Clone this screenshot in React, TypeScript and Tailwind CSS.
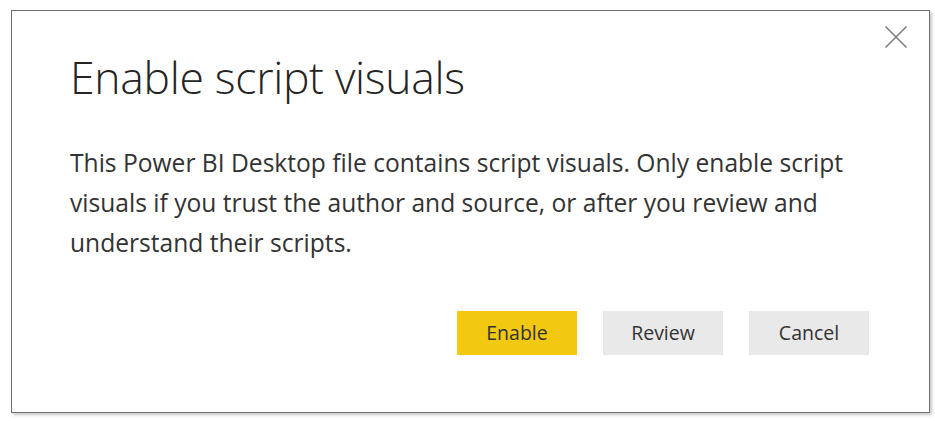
export default function App() {
  return (
    <div className="w-[935px] h-[421px] bg-white pl-[11px] pt-[10px]" style={{ fontFamily: '"Open Sans", "Noto Sans", sans-serif' }}>
      <div className="relative w-[919px] h-[403px] border border-[#6f6f6f] bg-white shadow-[2px_2px_3px_rgba(0,0,0,0.22)] pl-[58px] pt-[36px] flex flex-col">
        <button className="absolute right-[20px] top-[13px] w-[26px] h-[26px] flex items-center justify-center text-[#7a7a7a]">
          <svg width="24" height="24" viewBox="0 0 24 24" fill="none" stroke="currentColor" strokeWidth="1.5">
            <path d="M1.5 1.5 L22.5 22.5 M22.5 1.5 L1.5 22.5" />
          </svg>
        </button>
        <h1 className="text-[44.5px] font-light text-[#252423] leading-[60px] tracking-[-0.3px]">Enable script visuals</h1>
        <p className="mt-[36px] text-[24.6px] leading-[40px] text-[#333] whitespace-nowrap">
          This Power BI Desktop file contains script visuals. Only enable script
          <br />
          visuals if you trust the author and source, or after you review and
          <br />
          understand their scripts.
        </p>
        <div className="mt-[48px] mr-[60px] flex justify-end gap-[26px] text-[19.5px] text-[#333]">
          <button className="w-[120px] h-[44px] bg-[#f2c811]">Enable</button>
          <button className="w-[120px] h-[44px] bg-[#e9e9e9]">Review</button>
          <button className="w-[120px] h-[44px] bg-[#e9e9e9]">Cancel</button>
        </div>
      </div>
    </div>
  );
}
